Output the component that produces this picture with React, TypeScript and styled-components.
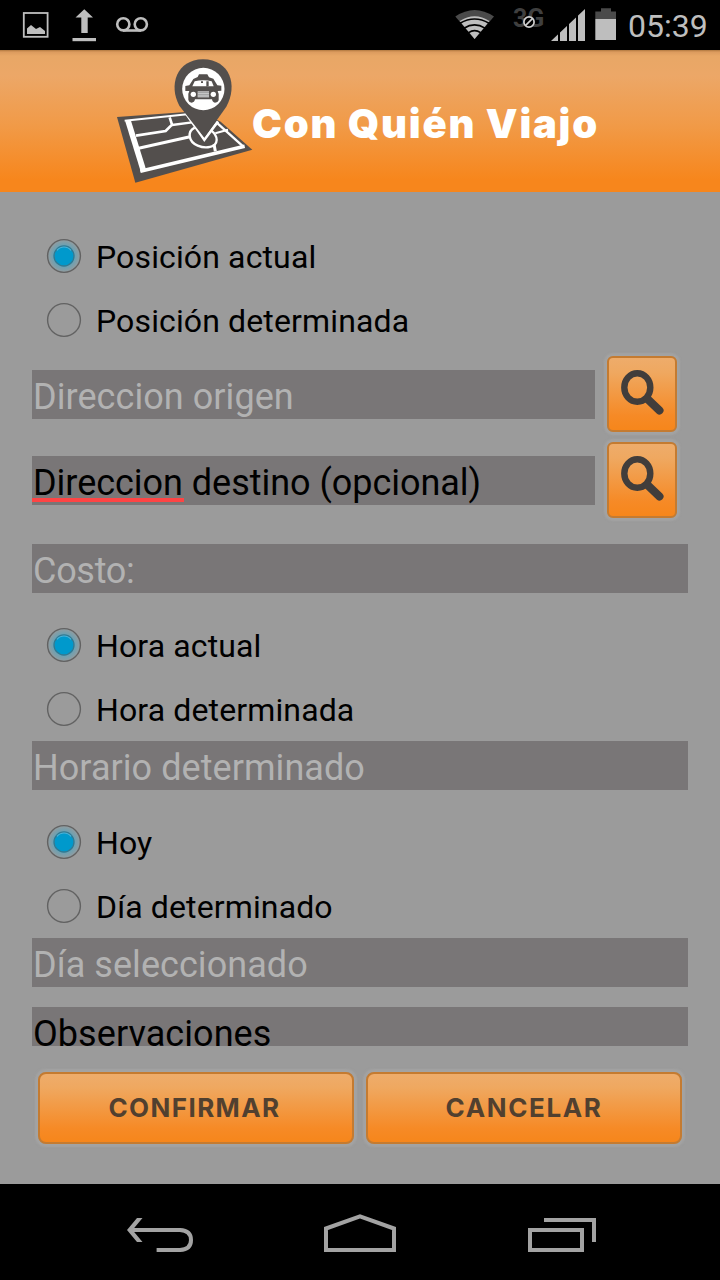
import React from 'react';
import styled, { createGlobalStyle } from 'styled-components';

const GlobalStyle = createGlobalStyle`
  * { box-sizing: border-box; }
  body { margin: 0; background: #000; font-family: Roboto, "Liberation Sans", sans-serif; }
  svg { display: block; flex: none; }
`;

const Screen = styled.div`
  width: 720px;
  height: 1280px;
  display: flex;
  flex-direction: column;
  overflow: hidden;
  background: #9b9b9b;
`;

const StatusBar = styled.div`
  height: 50px;
  flex: none;
  display: flex;
  justify-content: space-between;
  background: #000;
  color: #bebebe;
`;

const StatusGroup = styled.div`
  display: flex;
  align-items: center;
`;

const Clock = styled.span`
  width: 100px;
  padding-left: 8px;
  font-size: 32px;
  line-height: 50px;
  white-space: nowrap;
  padding-top: 2px;
`;

const Header = styled.header`
  height: 142px;
  flex: none;
  display: flex;
  padding-left: 100px;
  background: linear-gradient(#b0783f 0, #dc9b5e 2px, #e8a766 6px, #eca767 26px, #f19a47 76px, #f7861c 130px, #f7861c 100%);
`;

const Brand = styled.h1`
  margin: 0 0 0 -18px;
  font-family: Inter, "Liberation Sans", sans-serif;
  font-size: 40px;
  font-weight: 900;
  line-height: 147px;
  letter-spacing: 1.75px;
  color: #fff;
  white-space: nowrap;
`;

const Form = styled.main`
  height: 854px;
  flex: none;
  padding: 32px 32px 0;
  overflow: hidden;
`;

const RadioGroup = styled.div<{ $top?: number }>`
  display: flex;
  flex-direction: column;
  margin-top: ${(p) => p.$top ?? 0}px;
`;

const RadioRow = styled.label`
  height: 64px;
  display: flex;
  align-items: center;
  padding-left: 14px;
`;

const RadioText = styled.span`
  margin-left: 14px;
  padding-top: 2px;
  font-size: 32px;
  line-height: 38px;
  letter-spacing: 0.13px;
  color: #000;
  white-space: nowrap;
`;

const Field = styled.div<{ $hint?: boolean; $top?: number; $spacing?: number }>`
  height: 49px;
  flex: 1;
  margin-top: ${(p) => p.$top ?? 0}px;
  padding: 5px 0 0 1px;
  background: #797677;
  color: ${(p) => (p.$hint ? '#b2b2b2' : '#000')};
  font-size: 36px;
  line-height: 45px;
  letter-spacing: ${(p) => p.$spacing ?? 0.06}px;
  white-space: nowrap;
`;

const Misspelled = styled.span`
  position: relative;
  &::after {
    content: '';
    position: absolute;
    left: -1px;
    right: -1px;
    bottom: 2px;
    height: 4px;
    background: #ff4444;
  }
`;

const SearchRow = styled.div`
  height: 86px;
  display: flex;
  align-items: flex-start;
  gap: 12px;
  padding: 4px 11px 0 0;
`;

const OrangeButton = styled.button`
  display: flex;
  align-items: center;
  justify-content: center;
  padding: 0;
  border: 2px solid #c47b31;
  border-radius: 6px;
  background: linear-gradient(#eeac6b, #efa860 20%, #f68a26 80%, #f6861b);
  box-shadow: 0 0 2px 3px rgba(172, 172, 172, 0.5);
`;

const SearchButton = styled(OrangeButton)`
  width: 70px;
  height: 76px;
  flex: none;
`;

const ActionBar = styled.div`
  height: 138px;
  flex: none;
  display: flex;
  align-items: flex-start;
  gap: 12px;
  padding: 26px 38px 0;
`;

const ActionButton = styled(OrangeButton)`
  flex: 1;
  height: 72px;
  padding-bottom: 2px;
  border-radius: 8px;
  font-family: Inter, "Liberation Sans", sans-serif;
  font-size: 26px;
  font-weight: 700;
  color: #51402f;
`;

const ActionLabel = styled.span<{ $spacing: number; $shift?: number }>`
  letter-spacing: ${(p) => p.$spacing}px;
  padding-right: ${(p) => p.$shift ?? 0}px;
`;

const NavBar = styled.nav`
  height: 96px;
  flex: none;
  display: flex;
  justify-content: center;
  gap: 118px;
  background: #000;
`;

function StatusIcons() {
  return (
    <svg width="160" height="50" viewBox="0 0 160 50" fill="none">
      <rect x="23.8" y="13" width="23.8" height="23.8" stroke="#bebebe" strokeWidth="1.8" />
      <path d="M27 34V28.5L31 25L36 29L40 27L45 31V34Z" fill="#bebebe" />
      <path d="M84.3 9.3L93 17.6H87.7V33H81.3V17.6H75.5Z" fill="#bebebe" />
      <rect x="72.5" y="38" width="23.5" height="3.2" fill="#bebebe" />
      <circle cx="123.3" cy="24.3" r="6.1" stroke="#bebebe" strokeWidth="2.6" />
      <circle cx="140.8" cy="24.3" r="6.1" stroke="#bebebe" strokeWidth="2.6" />
      <path d="M123 30.5H141" stroke="#bebebe" strokeWidth="2.6" />
    </svg>
  );
}

function SignalIcons() {
  return (
    <svg width="180" height="50" viewBox="440 0 180 50" fill="none">
      <path d="M455.3 16.5Q474.6 3.5 494 16.5L474.6 39Z" fill="#4a4a4a" />
      <path d="M459.7 21Q474.6 11.5 489.5 21L474.6 39Z" fill="#bebebe" />
      <path d="M460 23.2Q474.6 14.8 489 23.2M464 28.2Q474.6 21.5 485 28.2M468.6 32.6Q474.6 28.6 480.6 32.6" stroke="#000" strokeWidth="1.6" />
      <text x="513" y="27" fontFamily="Roboto, sans-serif" fontSize="25" fontWeight="700" fill="#3f3f3f">3G</text>
      <circle cx="529" cy="22" r="5.1" fill="#000" stroke="#d0d0d0" strokeWidth="1.7" />
      <path d="M525.6 25.4L532.4 18.6" stroke="#d0d0d0" strokeWidth="1.6" />
      <path d="M551 41L585 9V41Z" fill="#bebebe" />
      <path d="M559 8V42M568 8V42M577 8V42" stroke="#000" strokeWidth="2" />
      <path d="M595.3 11.5H601V8.3H611V11.5H616V19H595.3Z" fill="#4a4a4a" />
      <path d="M595.3 19H616V40H595.3Z" fill="#bebebe" />
    </svg>
  );
}

function Logo() {
  return (
    <svg width="170" height="142" viewBox="0 0 510 426" fill="none">
      <path d="M51 201L300 183L362 215L457 299L106 398Z" fill="#534f4d" />
      <g stroke="#fff">
        <path d="M84 212L131 364" strokeWidth="17" />
        <path d="M74 212L262 193" strokeWidth="6" />
        <path d="M121 364L434 289" strokeWidth="11" />
        <path d="M350 218L430 290" strokeWidth="7" />
        <path d="M108 257L197 243L216 224L209 202" strokeWidth="8" />
        <path d="M216 225L276 217" strokeWidth="7" />
        <path d="M116 295L270 260" strokeWidth="9" />
        <path d="M346 250L384 239" strokeWidth="6" />
        <path d="M342 283L346 304" strokeWidth="9" />
        <path d="M284 233C260 245 266 276 293 287C317 297 349 293 350 270Q350 254 334 242" strokeWidth="7" />
        <path d="M257 189L313 269L354 214" strokeWidth="8" fill="#534f4d" />
      </g>
      <path d="M238 167C205 107 229 29 309 28C391 29 414 107 379 170L313 263Z" fill="#534f4d" />
      <circle cx="310" cy="117" r="63.5" fill="#fff" />
      <path d="M293 81L297 73H322L327 82L340 86L352 106L364 107V122L353 123L356 132V151Q354 158 345 158Q337 157 336 148H285Q283 158 275 158Q267 158 265 150V131L268 123H256V108L268 106L280 87Z" fill="#534f4d" />
      <path d="M284 94Q310 88 335 94L341 109H277Z" fill="#fff" />
      <path d="M303 99V94H309V99ZM319 94H326V108L319 110Z" fill="#534f4d" />
      <path d="M293 124H327V142H293Z" fill="#ddd" />
      <path d="M293 128H327M293 133H327M293 138H327" stroke="#777" strokeWidth="2" />
      <circle cx="280" cy="133" r="8" fill="#fff" />
      <circle cx="340" cy="133" r="8" fill="#fff" />
    </svg>
  );
}

function RadioMark({ checked }: { checked?: boolean }) {
  return (
    <svg width="36" height="36" viewBox="0 0 36 36" fill="none">
      <defs>
        <radialGradient id="halo">
          <stop offset="0.55" stopColor="#5fa3ba" />
          <stop offset="1" stopColor="#959b9d" />
        </radialGradient>
      </defs>
      <circle cx="18" cy="18" r="16.4" fill={checked ? 'url(#halo)' : 'none'} stroke="#626262" strokeWidth="1.4" />
      {checked && (
        <>
          <circle cx="18" cy="18" r="10" fill="#0099cc" stroke="#327991" strokeWidth="1.3" />
          <path d="M11 12.4A9 9 0 0 1 25 12.4" stroke="#4fb4d8" strokeWidth="1.1" />
        </>
      )}
    </svg>
  );
}

function SearchIcon() {
  return (
    <svg width="66" height="72" viewBox="0 0 66 72" fill="none" stroke="#413d3b">
      <ellipse cx="28.3" cy="29.5" rx="13" ry="14.2" strokeWidth="6.4" />
      <path d="M38.5 41L50.5 52.500" strokeWidth="8" strokeLinecap="round" />
    </svg>
  );
}

function Radio({ label, checked }: { label: string; checked?: boolean }) {
  return (
    <RadioRow>
      <RadioMark checked={checked} />
      <RadioText>{label}</RadioText>
    </RadioRow>
  );
}

export default function App() {
  return (
    <Screen>
      <GlobalStyle />
      <StatusBar>
        <StatusGroup>
          <StatusIcons />
        </StatusGroup>
        <StatusGroup>
          <SignalIcons />
          <Clock>05:39</Clock>
        </StatusGroup>
      </StatusBar>
      <Header>
        <Logo />
        <Brand>Con Quién Viajo</Brand>
      </Header>
      <Form>
        <RadioGroup>
          <Radio label="Posición actual" checked />
          <Radio label="Posición determinada" />
        </RadioGroup>
        <SearchRow>
          <Field $hint $top={14}>Direccion origen</Field>
          <SearchButton aria-label="Buscar origen"><SearchIcon /></SearchButton>
        </SearchRow>
        <SearchRow>
          <Field $top={14} $spacing={-0.03}><Misspelled>Direccion</Misspelled> destino (opcional)</Field>
          <SearchButton aria-label="Buscar destino"><SearchIcon /></SearchButton>
        </SearchRow>
        <Field $hint $top={20} $spacing={-0.3}>Costo:</Field>
        <RadioGroup $top={20}>
          <Radio label="Hora actual" checked />
          <Radio label="Hora determinada" />
        </RadioGroup>
        <Field $hint>Horario determinado</Field>
        <RadioGroup $top={20}>
          <Radio label="Hoy" checked />
          <Radio label="Día determinado" />
        </RadioGroup>
        <Field $hint>Día seleccionado</Field>
        <Field $top={20}>Observaciones</Field>
      </Form>
      <ActionBar>
        <ActionButton><ActionLabel $spacing={1.4} $shift={3}>CONFIRMAR</ActionLabel></ActionButton>
        <ActionButton><ActionLabel $spacing={1.6}>CANCELAR</ActionLabel></ActionButton>
      </ActionBar>
      <NavBar>
        <svg width="84" height="96" viewBox="116 1184 84 96" fill="none" stroke="#a3a3a3" strokeWidth="4">
          <path d="M131 1230H180Q191 1230.500 191 1240Q191 1249.500 180 1250H156.600" />
          <path d="M127 1230L137 1218H142.500L132.500 1230L142.500 1242H137Z" fill="#a3a3a3" stroke="none" />
        </svg>
        <svg width="84" height="96" viewBox="318 1184 84 96" fill="none" stroke="#a3a3a3" strokeWidth="4">
          <path d="M326 1250V1228.500L360 1216.300L394 1228.500V1250Z" />
        </svg>
        <svg width="84" height="96" viewBox="520 1184 84 96" fill="none" stroke="#a3a3a3" strokeWidth="4">
          <path d="M530 1230H582V1250H530ZM544 1220H594V1242" />
        </svg>
      </NavBar>
    </Screen>
  );
}
